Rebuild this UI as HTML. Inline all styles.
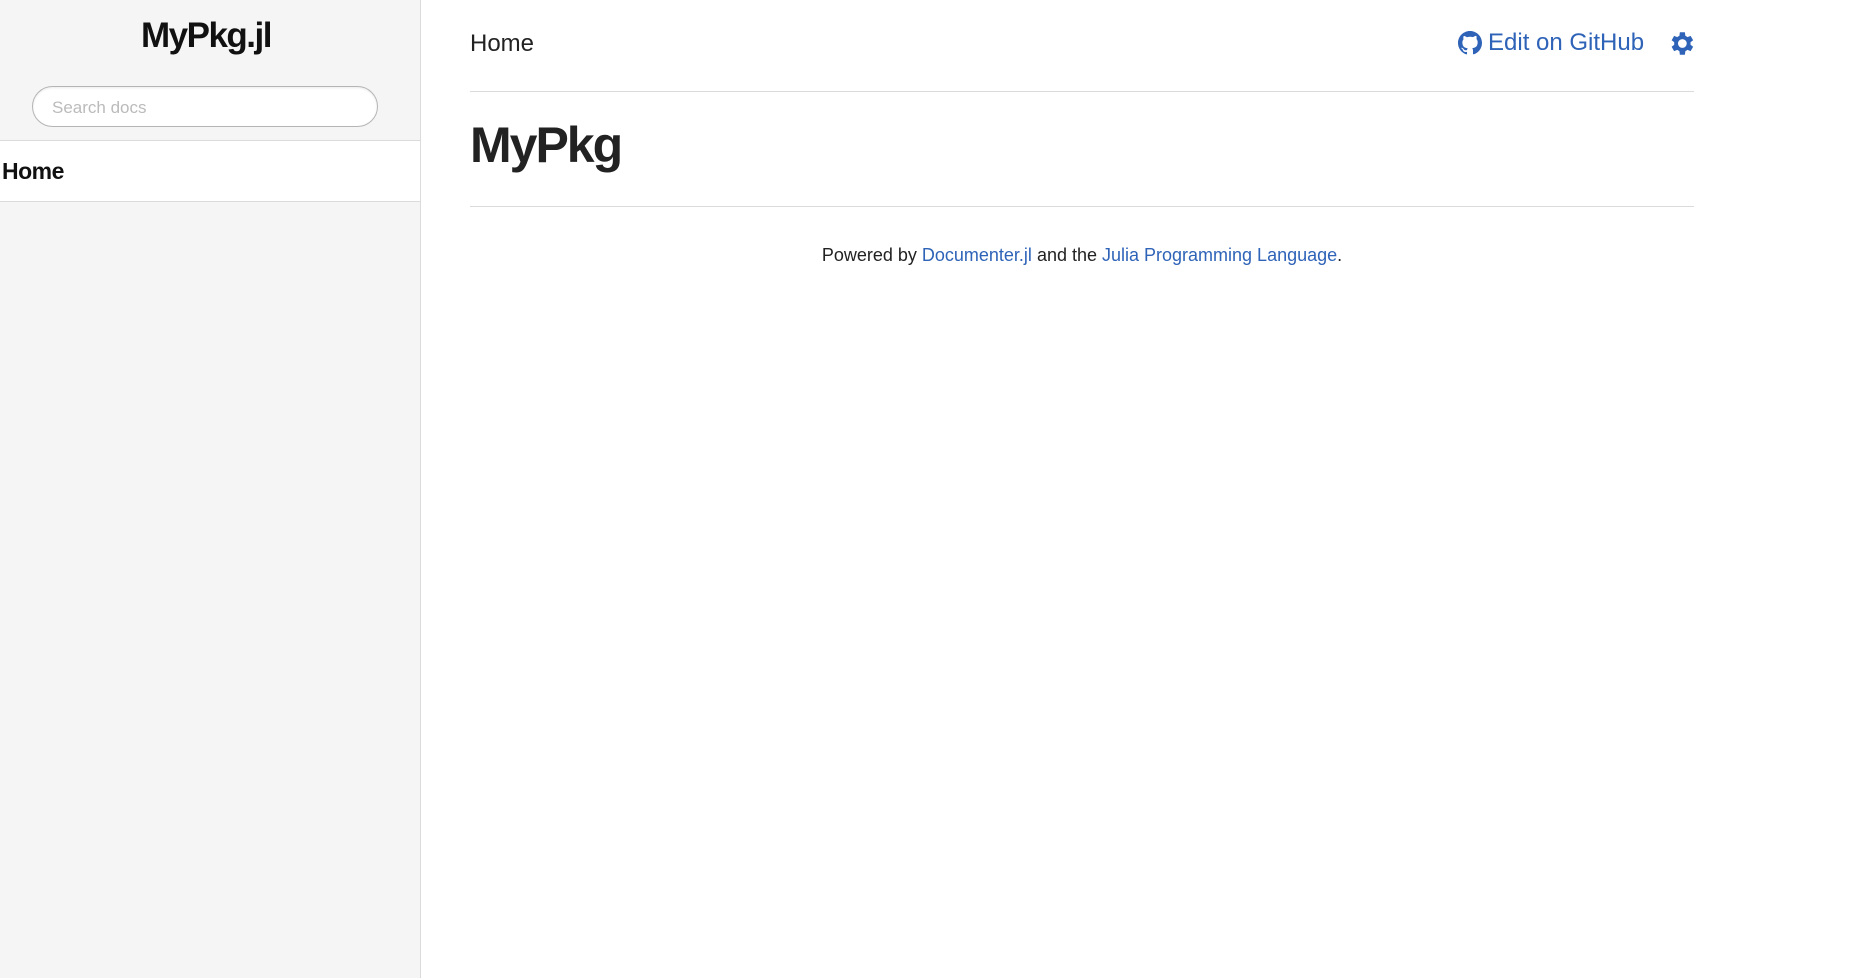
<!DOCTYPE html>
<html><head><meta charset="utf-8"><style>
*{box-sizing:border-box;margin:0;padding:0}
body{width:1873px;height:978px;overflow:hidden;background:#fff;font-family:"Liberation Sans",sans-serif;color:#222;position:relative}
#side{position:absolute;left:0;top:0;width:421px;height:978px;background:#f5f5f5;border-right:1px solid #dbdbdb}
#side h1{position:absolute;top:16px;left:0;width:412px;text-align:center;font-size:35px;font-weight:bold;color:#111;letter-spacing:-1.5px}
#search{position:absolute;left:32px;top:86px;width:346px;height:41px;border:1px solid #b5b5b5;border-radius:21px;background:#fff;color:#bbb;font-size:17px;padding:11px 19px;box-shadow:inset 0 1px 2px rgba(0,0,0,.08)}
#nav{position:absolute;left:0;top:140px;width:420px;height:62px;background:#fff;border-top:1px solid #dbdbdb;border-bottom:1px solid #dbdbdb;font-size:23px;font-weight:bold;color:#111;padding:17px 2px;letter-spacing:-0.5px}
#crumb{position:absolute;left:470px;top:30px;font-size:24px;color:#222}
#edit{position:absolute;left:1458px;top:29px;font-size:24px;color:#2e63b8;display:flex;align-items:center;gap:6px}
#gear{position:absolute;left:1670px;top:31px}
.hr{position:absolute;left:470px;width:1224px;height:1px;background:#dbdbdb}
#h1{position:absolute;left:470px;top:116px;font-size:50px;font-weight:bold;color:#222;letter-spacing:-2px}
#foot{position:absolute;left:470px;width:1224px;top:245px;text-align:center;font-size:18px;color:#222}
a{color:#2e63b8;text-decoration:none}
</style></head><body>
<div id="side"><h1>MyPkg.jl</h1><div id="search">Search docs</div><div id="nav">Home</div></div>
<div id="crumb">Home</div>
<div id="edit"><svg width="24" height="24" viewBox="0 0 16 16"><path fill="#2e63b8" d="M8 0C3.580 0 0 3.58 0 8c0 3.54 2.29 6.53 5.47 7.59.4.07.55-.17.55-.38v-1.33c-2.23.48-2.7-1.07-2.7-1.07-.36-.92-.89-1.170-.89-1.17-.73-.5.05-.49.05-.49.8.06 1.23.83 1.23.83.71 1.23 1.87.87 2.33.66.07-.52.28-.87.5-1.07-1.78-.2-3.64-.89-3.64-3.95 0-.87.31-1.59.82-2.15-.08-.2-.36-1.02.08-2.12 0 0 .67-.21 2.2.82A7.6 7.6 0 0 1 8 3.8c.68 0 1.36.09 2 .27 1.53-1.04 2.2-.82 2.2-.82.44 1.1.16 1.92.08 2.12.51.56.82 1.27.82 2.15 0 3.07-1.87 3.75-3.65 3.950.29.25.54.73.54 1.48v2.2c0 .21.15.46.55.38A8 8 0 0 0 16 8c0-4.42-3.58-8-8-8z"/></svg><span>Edit on GitHub</span></div>
<svg id="gear" width="25" height="25" viewBox="3 2 20 20"><path fill="#2e63b8" d="M19.4 13a7.5 7.5 0 0 0 0-2l2.1-1.6-2-3.5-2.5 1a7.4 7.4 0 0 0-1.7-1L14.9 3h-4l-.4 2.9a7.4 7.4 0 0 0-1.7 1l-2.5-1-2 3.5L6.4 11a7.5 7.5 0 0 0 0 2l-2.1 1.6 2 3.5 2.5-1c.5.4 1.1.7 1.7 1l.4 2.9h4l.4-2.9c.6-.3 1.2-.6 1.7-1l2.5 1 2-3.5zM12.9 15.5a3.5 3.5 0 1 1 0-7 3.5 3.5 0 0 1 0 7z"/></svg>
<div class="hr" style="top:91px"></div>
<div id="h1">MyPkg</div>
<div class="hr" style="top:206px"></div>
<div id="foot">Powered by <a>Documenter.jl</a> and the <a>Julia Programming Language</a>.</div>
</body></html>
